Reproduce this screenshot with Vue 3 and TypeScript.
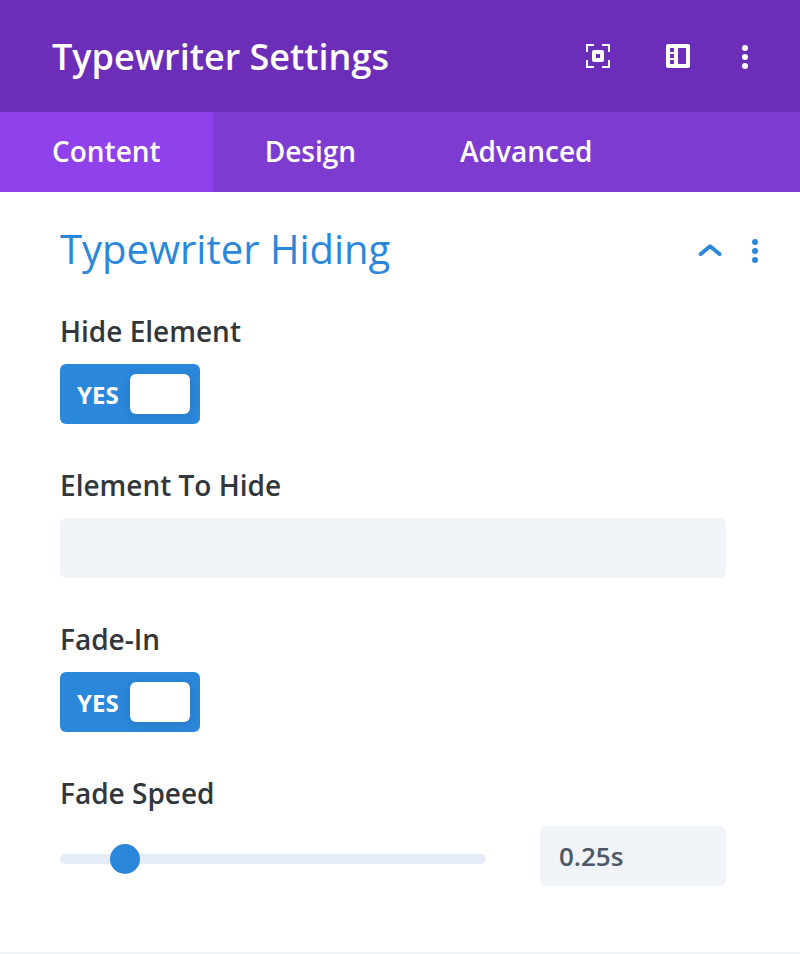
<script setup lang="ts">
import { computed, ref } from 'vue'

const tabs = ['Content', 'Design', 'Advanced']
const activeTab = ref('Content')
const expanded = ref(true)
const hideElement = ref(true)
const elementToHide = ref('')
const fadeIn = ref(true)
const speed = ref(250)
const maxSpeed = 2000

const speedText = computed({
  get: () => `${speed.value / 1000}s`,
  set: (text: string) => {
    const seconds = parseFloat(text)
    if (!Number.isNaN(seconds)) speed.value = Math.round(seconds * 1000)
  },
})
</script>

<template>
  <main class="panel">
    <header class="header">
      <h1>Typewriter Settings</h1>
      <div class="actions">
        <button type="button" aria-label="Expand">
          <svg width="24" height="24" viewBox="0 0 24 24" fill="none" stroke="currentColor">
            <path d="M1 8V1h7M16 1h7v7M23 16v7h-7M8 23H1v-7" stroke-width="2" />
            <rect x="8" y="8" width="8" height="8" stroke-width="4" stroke-linejoin="round" />
          </svg>
        </button>
        <button type="button" aria-label="Dock panel">
          <svg width="24" height="24" viewBox="0 0 24 24">
            <path fill="currentColor" fill-rule="evenodd" d="M2 0h20a2 2 0 0 1 2 2v20a2 2 0 0 1-2 2H2a2 2 0 0 1-2-2V2a2 2 0 0 1 2-2zM12 4v16h8V4zM4 4v4h4V4zM4 10v4h4v-4zM4 16v4h4v-4z" />
          </svg>
        </button>
        <button type="button" class="more" aria-label="More options">
          <svg width="6" height="26" viewBox="0 0 6 26" fill="currentColor">
            <circle cx="3" cy="5" r="3" /><circle cx="3" cy="14" r="3" /><circle cx="3" cy="23" r="3" />
          </svg>
        </button>
      </div>
    </header>

    <nav class="tabs">
      <button v-for="tab in tabs" :key="tab" type="button" :class="{ active: tab === activeTab }" @click="activeTab = tab">{{ tab }}</button>
    </nav>

    <section class="group">
      <div class="group-head">
        <h2>Typewriter Hiding</h2>
        <div class="group-actions">
          <button type="button" aria-label="Toggle section" :aria-expanded="expanded" @click="expanded = !expanded">
            <svg width="24" height="14" viewBox="0 0 24 14" fill="none" stroke="currentColor" stroke-width="4" stroke-linecap="round" stroke-linejoin="round">
              <path d="M2.7 11l9.4-7.7 9.4 7.7" />
            </svg>
          </button>
          <button type="button" aria-label="Section options">
            <svg width="6" height="26" viewBox="0 0 6 26" fill="currentColor">
              <circle cx="3" cy="5" r="3" /><circle cx="3" cy="14" r="3" /><circle cx="3" cy="23" r="3" />
            </svg>
          </button>
        </div>
      </div>

      <div v-if="expanded" class="fields">
        <div class="field">
          <label for="hide-element">Hide Element</label>
          <div class="toggle">
            <input id="hide-element" v-model="hideElement" type="checkbox" role="switch" />
            <span class="state">{{ hideElement ? 'YES' : 'NO' }}</span>
            <span class="knob"></span>
          </div>
        </div>
        <div class="field">
          <label for="element-to-hide">Element To Hide</label>
          <input id="element-to-hide" v-model="elementToHide" class="text" type="text" />
        </div>
        <div class="field">
          <label for="fade-in">Fade-In</label>
          <div class="toggle">
            <input id="fade-in" v-model="fadeIn" type="checkbox" role="switch" />
            <span class="state">{{ fadeIn ? 'YES' : 'NO' }}</span>
            <span class="knob"></span>
          </div>
        </div>
        <div class="field">
          <label for="fade-speed">Fade Speed</label>
          <div class="speed">
            <input id="fade-speed" v-model.number="speed" type="range" min="0" :max="maxSpeed" step="50" />
            <input v-model.lazy="speedText" class="text" type="text" aria-label="Fade speed value" />
          </div>
        </div>
      </div>
    </section>
  </main>
</template>

<style>
body {
  background: #fff;
}
</style>

<style scoped>
.panel,
.panel * {
  box-sizing: border-box;
}
.panel {
  font-family: 'Open Sans', sans-serif;
  font-weight: 600;
  color: #32373c;
}
button {
  padding: 0;
  border: 0;
  background: none;
  color: inherit;
  font: inherit;
  cursor: pointer;
}
svg {
  display: block;
}
.header {
  display: flex;
  align-items: center;
  justify-content: space-between;
  height: 112px;
  padding: 0 52px;
  background: #6c2eb9;
  color: #fff;
}
h1 {
  margin: 0;
  padding-top: 2px;
  font-size: 36px;
  font-weight: 600;
  line-height: 48px;
}
.actions {
  display: flex;
  align-items: center;
  gap: 56px;
}
.actions .more {
  margin-left: -4px;
}
.tabs {
  display: flex;
  height: 80px;
  background: #7e3bd0;
  color: #fff;
}
.tabs button {
  padding: 0 52px 2px;
  font-size: 28px;
}
.tabs .active {
  background: #8f42ec;
}
.group {
  padding: 32px 42px 66px 60px;
  border-bottom: 2px solid #f0f3f8;
}
.group-head {
  display: flex;
  align-items: center;
  justify-content: space-between;
  color: #2b87da;
}
h2 {
  margin: 0;
  padding-bottom: 2px;
  font-size: 40px;
  font-weight: 400;
  line-height: 50px;
}
.group-actions {
  display: flex;
  align-items: center;
  gap: 30px;
}
.fields {
  display: flex;
  flex-direction: column;
  gap: 42px;
  padding: 36px 32px 0 0;
}
.field {
  display: flex;
  flex-direction: column;
  gap: 14px;
}
.field label {
  font-size: 28px;
  line-height: 38px;
}
.toggle {
  position: relative;
  display: flex;
  align-items: center;
  justify-content: space-between;
  width: 140px;
  height: 60px;
  padding: 0 10px 0 17px;
  border-radius: 6px;
  background: #2b87da;
}
.toggle:has(input:not(:checked)) {
  flex-direction: row-reverse;
  padding: 0 17px 0 10px;
  background: #a2b0c1;
}
.toggle input {
  position: absolute;
  inset: 0;
  width: 100%;
  height: 100%;
  margin: 0;
  opacity: 0;
  cursor: pointer;
}
.state {
  padding-top: 2px;
  color: #fff;
  font-size: 24px;
  font-weight: 700;
  line-height: 32px;
}
.knob {
  flex: none;
  width: 60px;
  height: 40px;
  border-radius: 6px;
  background: #fff;
  box-shadow: 0 2px 10px rgba(0, 0, 0, 0.1);
}
.text {
  width: 100%;
  height: 60px;
  padding: 0 19px;
  border: 0;
  border-radius: 6px;
  background: #f0f3f8;
  color: #4c5866;
  font: 600 26px 'Open Sans', sans-serif;
}
.speed {
  display: flex;
  align-items: center;
  gap: 54px;
}
.speed .text {
  flex: 0 0 186px;
  width: 186px;
}
input[type='range'] {
  flex: 1;
  min-width: 0;
  height: 30px;
  margin: 6px 0 0;
  appearance: none;
  background: none;
}
input[type='range']::-webkit-slider-runnable-track {
  height: 10px;
  border-radius: 5px;
  background: #e6ecf6;
}
input[type='range']::-webkit-slider-thumb {
  appearance: none;
  width: 30px;
  height: 30px;
  margin-top: -10px;
  border-radius: 50%;
  background: #2b87da;
}
</style>
